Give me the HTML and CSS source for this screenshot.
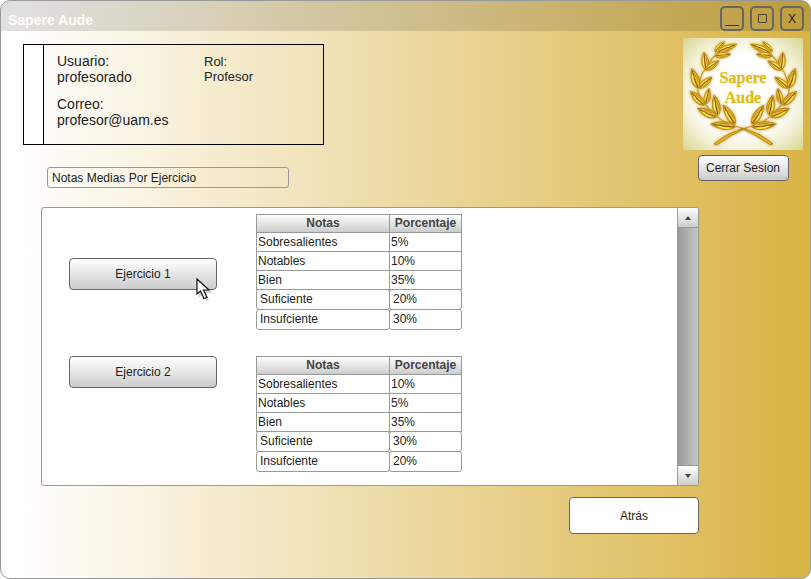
FILE: index.html
```html
<!DOCTYPE html>
<html lang="es">
<head>
<meta charset="utf-8">
<title>Sapere Aude</title>
<link rel="stylesheet" href="styles.css">
</head>
<body>
<div class="window">
  <header class="titlebar">
    <h1 class="title">Sapere Aude</h1>
    <div class="controls">
      <button class="control" type="button">__</button>
      <button class="control" type="button"><span class="square"></span></button>
      <button class="control" type="button">X</button>
    </div>
  </header>
  <main>
    <div class="top">
      <div class="intro">
        <section class="card">
          <div class="strip"></div>
          <div class="account">
            <p>Usuario:<br>profesorado</p>
            <p>Correo:<br>profesor@uam.es</p>
          </div>
          <p class="role">Rol:<br>Profesor</p>
        </section>
        <input class="heading" type="text" aria-label="Informe" value="Notas Medias Por Ejercicio">
      </div>
      <div class="brand">
        <svg class="logo" viewBox="0 0 120 112">
          <defs>
            <radialGradient id="paper" cx="50%" cy="50%" r="70%">
              <stop offset="0.5" stop-color="#fff"/>
              <stop offset="0.72" stop-color="#f3f1d6"/>
              <stop offset="1" stop-color="#d8d593"/>
            </radialGradient>
            <filter id="soft" x="-20%" y="-20%" width="140%" height="140%"><feGaussianBlur stdDeviation="1.500"/></filter>
            <g id="leaf">
              <path d="M0 0C-5-4-5-12 0-20C5-12 5-4 0 0Z" fill="#e9c22c" stroke="#b98a17" stroke-width="1"/>
              <path d="M0-1Q-1-9 0-18" fill="none" stroke="#8a540c" stroke-width="1.100"/>
              <path d="M2-5Q3-9 1-14" fill="none" stroke="#a8700f" stroke-width=".7"/>
              <path d="M-2-5Q-2.500-9-1-14" fill="none" stroke="#ffec70" stroke-width="1"/>
            </g>
            <g id="branch">
              <path d="M60 91Q54 88 50 88Q34 82 22 66Q12 54 16 48Q18 34 23 31Q27 21 36 14" fill="none" stroke="#c9991c" stroke-width="1.200"/>
              <path d="M58 90Q76 94 90 106Q87 108 83 104Q73 97 58 90Z" fill="#e2b322" stroke="#b07d10" stroke-width=".8"/>
              <use href="#leaf" transform="translate(32 14) rotate(42) scale(.7)"/>
              <use href="#leaf" transform="translate(35 14) rotate(67) scale(.8 1)"/>
              <use href="#leaf" transform="translate(32 18) rotate(84) scale(.7 .8)"/>
              <use href="#leaf" transform="translate(23 32) rotate(-6) scale(.9)"/>
              <use href="#leaf" transform="translate(23 32) rotate(55) scale(.8)"/>
              <use href="#leaf" transform="translate(15 50) rotate(-18)"/>
              <use href="#leaf" transform="translate(16 50) rotate(50) scale(.85)"/>
              <use href="#leaf" transform="translate(21 67) rotate(-45) scale(.95)"/>
              <use href="#leaf" transform="translate(23 66) rotate(11) scale(.8)"/>
              <use href="#leaf" transform="translate(33 79) rotate(-65)"/>
              <use href="#leaf" transform="translate(35 77) rotate(-11)"/>
              <use href="#leaf" transform="translate(52 89) rotate(-83) scale(1 1.200)"/>
              <use href="#leaf" transform="translate(52 86) rotate(-32) scale(1 1.100)"/>
            </g>
            <g id="wreath">
              <use href="#branch"/>
              <use href="#branch" transform="translate(121 0) scale(-1 1)"/>
            </g>
          </defs>
          <rect width="120" height="112" fill="url(#paper)"/>
          <use href="#wreath" filter="url(#soft)"/>
          <use href="#wreath"/>
          <text class="motto" x="60" y="45">Sapere</text>
          <text class="motto" x="60" y="65">Aude</text>
        </svg>
        <button class="button logout" type="button">Cerrar Sesion</button>
      </div>
    </div>
    <div class="report">
      <section class="panel">
        <div class="list">
          <div class="exercise">
            <div class="picker first">
              <button class="button open" type="button">Ejercicio 1</button>
              <svg class="pointer" viewBox="0 0 18 24">
                <path d="M3 4V20L7 16L10 23L13 22L10 15H16Z" fill="#888" opacity=".4"/>
                <path d="M1 1V16L4.500 13L8 20.500L11 19.500L7.500 12H13Z" fill="#fff" stroke="#111" stroke-width="1.200"/>
              </svg>
            </div>
            <table class="grades">
              <thead><tr><th>Notas</th><th>Porcentaje</th></tr></thead>
              <tbody>
                <tr><td>Sobresalientes</td><td>5%</td></tr>
                <tr><td>Notables</td><td>10%</td></tr>
                <tr><td>Bien</td><td>35%</td></tr>
                <tr class="round"><td>Suficiente</td><td>20%</td></tr>
                <tr class="round"><td>Insufciente</td><td>30%</td></tr>
              </tbody>
            </table>
          </div>
          <div class="exercise">
            <div class="picker">
              <button class="button open" type="button">Ejercicio 2</button>
            </div>
            <table class="grades">
              <thead><tr><th>Notas</th><th>Porcentaje</th></tr></thead>
              <tbody>
                <tr><td>Sobresalientes</td><td>10%</td></tr>
                <tr><td>Notables</td><td>5%</td></tr>
                <tr><td>Bien</td><td>35%</td></tr>
                <tr class="round"><td>Suficiente</td><td>30%</td></tr>
                <tr class="round"><td>Insufciente</td><td>20%</td></tr>
              </tbody>
            </table>
          </div>
        </div>
        <div class="scrollbar">
          <button class="arrow" type="button" aria-label="Subir"><svg viewBox="0 0 6 4"><path d="M3 0L6 4H0Z"/></svg></button>
          <div class="track"></div>
          <button class="arrow" type="button" aria-label="Bajar"><svg viewBox="0 0 6 4"><path d="M0 0H6L3 4Z"/></svg></button>
        </div>
      </section>
      <button class="button back" type="button">Atrás</button>
    </div>
  </main>
</div>
</body>
</html>
```
FILE: styles.css
```css
* { box-sizing: border-box; }

body {
  margin: 0;
  background: #fff;
  color: #222;
  font: 12px/16px "Liberation Sans", Arial, sans-serif;
}

p, h1 { margin: 0; }

button, input { font: inherit; color: inherit; }

.window {
  min-height: 100vh;
  border: 1px solid #999;
  border-radius: 10px;
  overflow: hidden;
  background: linear-gradient(90deg, #fff 2%, #d9b343);
}

.titlebar {
  display: flex;
  justify-content: space-between;
  height: 30px;
  padding: 5px 6px 0 7px;
  background: rgba(0, 0, 0, 0.12);
}

.title {
  padding-top: 6px;
  color: #fffdf5;
  font-size: 14px;
  line-height: 16px;
}

.controls { display: flex; gap: 6px; }

.control {
  display: flex;
  align-items: center;
  justify-content: center;
  width: 24px;
  height: 25px;
  padding: 0;
  border: 2px solid #666;
  border-radius: 5px;
  background: transparent;
}

.square {
  width: 9px;
  height: 9px;
  border: 1px solid #444;
  border-radius: 1px;
}

.top {
  display: flex;
  justify-content: space-between;
  align-items: flex-start;
  padding: 7px 7px 0 22px;
}

.intro { padding-top: 6px; }

.card {
  display: flex;
  width: 301px;
  height: 101px;
  border: 1px solid #000;
}

.strip {
  width: 20px;
  border-right: 1px solid #000;
  background: #fff;
}

.account {
  display: grid;
  gap: 11px;
  align-content: start;
  width: 147px;
  padding: 8px 0 0 13px;
  font-size: 14px;
}

.role {
  padding: 9px 0 0 13px;
  font-size: 13px;
  line-height: 15px;
}

.heading {
  display: block;
  width: 242px;
  height: 21px;
  margin: 22px 0 0 24px;
  padding: 0 4px;
  border: 1px solid #999;
  border-radius: 3px;
  background: transparent;
}

.brand {
  display: flex;
  flex-direction: column;
  align-items: center;
  gap: 5px;
}

.logo { width: 120px; height: 112px; }

.motto {
  fill: #e0bd12;
  stroke: #e0bd12;
  stroke-width: 0.3px;
  font: bold 16px "Liberation Serif", serif;
  text-anchor: middle;
}

.button {
  padding: 0;
  border: 1px solid #666;
  border-radius: 4px;
  background: linear-gradient(#fff, #ccc);
}

.logout { width: 91px; height: 26px; }

.report {
  display: flex;
  flex-direction: column;
  align-items: flex-end;
  gap: 11px;
  margin: 19px 111px 0 40px;
}

.panel {
  display: flex;
  width: 100%;
  border: 1px solid #999;
  border-radius: 3px;
  overflow: hidden;
  background: #fff;
}

.list {
  display: grid;
  flex: 1;
  gap: 26px;
  padding: 6px 0 13px 27px;
}

.exercise {
  display: grid;
  grid-template-columns: 148px 206px;
  gap: 39px;
  align-items: start;
}

.picker { position: relative; }
.first { padding-top: 44px; }

.open { display: block; width: 100%; height: 32px; }

.pointer {
  position: absolute;
  left: 127px;
  top: 64px;
  width: 18px;
  height: 24px;
}

.grades { display: block; }
.grades thead, .grades tbody { display: block; }
.grades tr {
  display: grid;
  grid-template-columns: 134px 72px;
  height: 20px;
}
.grades tbody tr { margin-top: -1px; }
.grades thead tr { height: 19px; }

.grades th, .grades td {
  padding: 0 1px;
  border: 1px solid #999;
  line-height: 18px;
}

.grades th {
  background: linear-gradient(#fff, #ccc);
  color: #444;
  line-height: 17px;
}

.grades th + th, .grades td + td { margin-left: -1px; }

.grades .round { height: 21px; }
.round td {
  padding: 0 3px;
  border-radius: 3px;
  line-height: 19px;
}

.scrollbar {
  display: flex;
  flex-direction: column;
  width: 21px;
  border-left: 1px solid #999;
}

.track {
  flex: 1;
  background: linear-gradient(90deg, #999, #c8c8c8);
}

.arrow {
  display: flex;
  align-items: center;
  justify-content: center;
  height: 20px;
  padding: 0;
  border: 0 solid #999;
  background: linear-gradient(#fff, #ccc);
}
.arrow:first-child { border-bottom-width: 1px; }
.arrow:last-child { border-top-width: 1px; }
.arrow svg { width: 6px; height: 4px; fill: #444; }

.back { width: 130px; height: 37px; background: #fff; }
```
